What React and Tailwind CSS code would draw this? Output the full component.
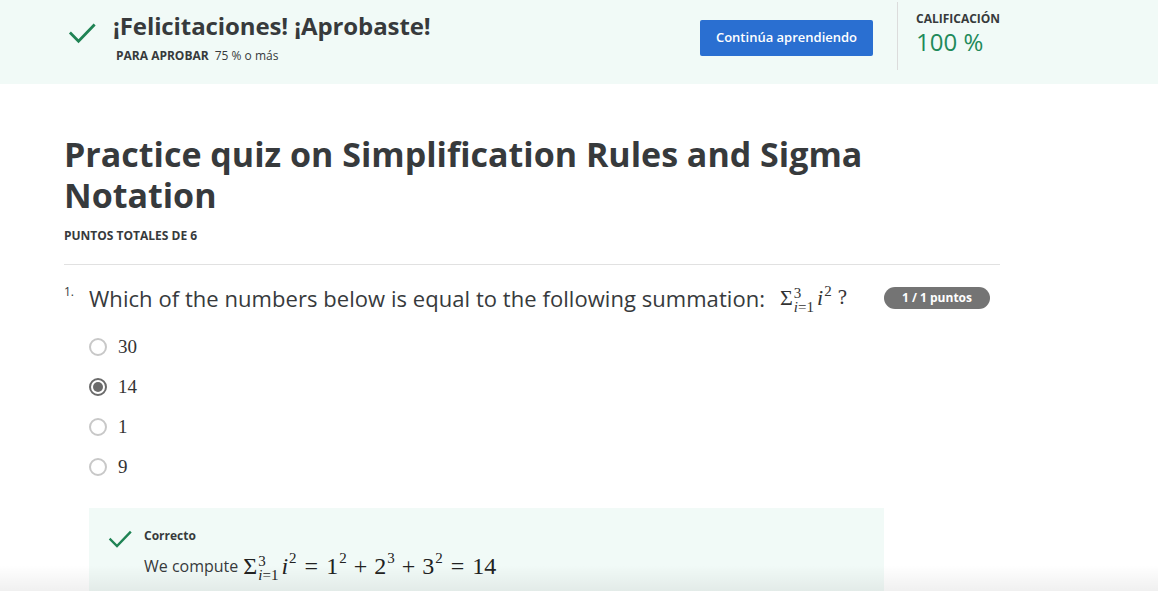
import React from "react";

const Check = ({ className }) => (
  <svg viewBox="0 0 24 24" className={className} fill="none" stroke="currentColor" strokeWidth="2.4" strokeLinecap="square">
    <path d="M2.5 12.5l6.5 6.5L22 5.5" />
  </svg>
);

const SumTerm = ({ size, scripts }) => (
  <span className={`inline-flex items-center leading-none ${size}`}>
    <span>Σ</span>
    <span className={`inline-flex flex-col leading-[1] ${scripts} ml-[1px] -mb-[4px]`}>
      <span className="-mb-[1px]">3</span>
      <span>
        <i>i</i>=1
      </span>
    </span>
    <span className="ml-[3px] inline-flex items-start">
      <i>i</i>
      <span className={`${scripts} leading-[1] -mt-[3px] ml-[1px]`}>2</span>
    </span>
  </span>
);

const Pow = ({ base, exp }) => (
  <span className="inline-flex items-start leading-none">
    {base}
    <span className="text-[15px] leading-[1] -mt-[3px] ml-[1px]">{exp}</span>
  </span>
);

const Radio = ({ checked }) =>
  checked ? (
    <span className="w-[18px] h-[18px] rounded-full border-2 border-[#6b6b6b] flex items-center justify-center">
      <span className="w-[10px] h-[10px] rounded-full bg-[#6b6b6b]" />
    </span>
  ) : (
    <span className="w-[18px] h-[18px] rounded-full border-2 border-[#c8c8c8]" />
  );

const options = [
  { label: "30", checked: false },
  { label: "14", checked: true },
  { label: "1", checked: false },
  { label: "9", checked: false },
];

export default function App() {
  return (
    <div className="h-screen overflow-hidden bg-white text-[#373a3c] font-['Open_Sans',sans-serif] relative">
      <header className="bg-[#f1faf7] h-[84px]">
        <div className="w-[936px] ml-16 flex items-start">
          <div className="flex items-start pt-[10px]">
            <Check className="w-[28px] h-[28px] text-[#1f8354] mt-[9px] ml-1" />
            <div className="ml-[17px]">
              <h2 className="text-[24px] leading-[32px] font-bold tracking-[-0.1px]">
                ¡Felicitaciones! ¡Aprobaste!
              </h2>
              <p className="text-[12px] leading-[16px] mt-[6px] ml-[3px]">
                <span className="font-bold">PARA APROBAR</span>
                <span className="ml-[6px]">75 % o más</span>
              </p>
            </div>
          </div>
          <div className="ml-auto flex items-start">
            <button className="mt-[20px] w-[173px] h-[36px] rounded-[2px] bg-[#2a6fd1] text-white text-[13px] font-semibold">
              Continúa aprendiendo
            </button>
            <div className="w-px h-[68px] bg-[#dcdcdc] mt-[2px] ml-[24px]" />
            <div className="ml-[18px] pt-[11px] w-[84px]">
              <p className="text-[12px] leading-[16px] font-bold">CALIFICACIÓN</p>
              <p className="text-[24px] leading-[28px] mt-[1px] text-[#1f8a5b]">100 %</p>
            </div>
          </div>
        </div>
      </header>

      <main className="w-[936px] ml-16">
        <h1 className="mt-[50px] text-[34px] leading-[41px] font-bold w-[820px]">
          Practice quiz on Simplification Rules and Sigma Notation
        </h1>
        <p className="mt-[12px] text-[12px] leading-[16px] font-bold">PUNTOS TOTALES DE 6</p>
        <hr className="mt-[20px] border-[#e1e1e1]" />

        <div className="mt-[18px] flex items-start">
          <span className="w-[25px] text-[12px] leading-[16px] pt-[1px]">1.</span>
          <div className="flex-1">
            <div className="flex items-center h-[30px]">
              <p className="text-[22px] leading-[30px] tracking-[0.05px]">
                Which of the numbers below is equal to the following summation:
              </p>
              <span className="ml-[15px] font-['Liberation_Serif',serif] text-[#333] flex items-center">
                <SumTerm size="text-[22px]" scripts="text-[15px]" />
                <span className="ml-[6px] text-[21px]">?</span>
              </span>
              <span className="ml-auto mr-[10px] w-[106px] h-[22px] rounded-full bg-[#747474] text-white text-[12px] font-bold flex items-center justify-center">
                1 / 1 puntos
              </span>
            </div>

            <div className="mt-[14px] flex flex-col">
              {options.map((o) => (
                <div key={o.label} className="h-[40px] flex items-center">
                  <Radio checked={o.checked} />
                  <span className="ml-[11px] font-['Liberation_Serif',serif] text-[19px] text-[#333]">{o.label}</span>
                </div>
              ))}
            </div>

            <div className="mt-[21px] w-[795px] bg-[#f1faf7] pt-[19px] pb-[40px] pl-[19px] flex items-start">
              <Check className="w-[24px] h-[24px] text-[#1f8354] mt-[0px]" />
              <div className="ml-[12px]">
                <p className="text-[12px] leading-[16px] font-bold mt-[1px]">Correcto</p>
                <div className="mt-[6px] text-[16px] leading-[32px] flex items-center">
                  <span>We compute</span>
                  <span className="ml-[5px] font-['Liberation_Serif',serif] text-[#222] flex items-center text-[24px] leading-none">
                    <SumTerm size="text-[24px]" scripts="text-[15px]" />
                    <span className="mx-[8px]">=</span>
                    <Pow base="1" exp="2" />
                    <span className="mx-[7px]">+</span>
                    <Pow base="2" exp="3" />
                    <span className="mx-[7px]">+</span>
                    <Pow base="3" exp="2" />
                    <span className="mx-[8px]">=</span>
                    <span>14</span>
                  </span>
                </div>
              </div>
            </div>
          </div>
        </div>
      </main>

      <div className="absolute inset-x-0 bottom-0 h-[26px] bg-linear-to-b from-black/0 to-black/[0.06] pointer-events-none" />
    </div>
  );
}
